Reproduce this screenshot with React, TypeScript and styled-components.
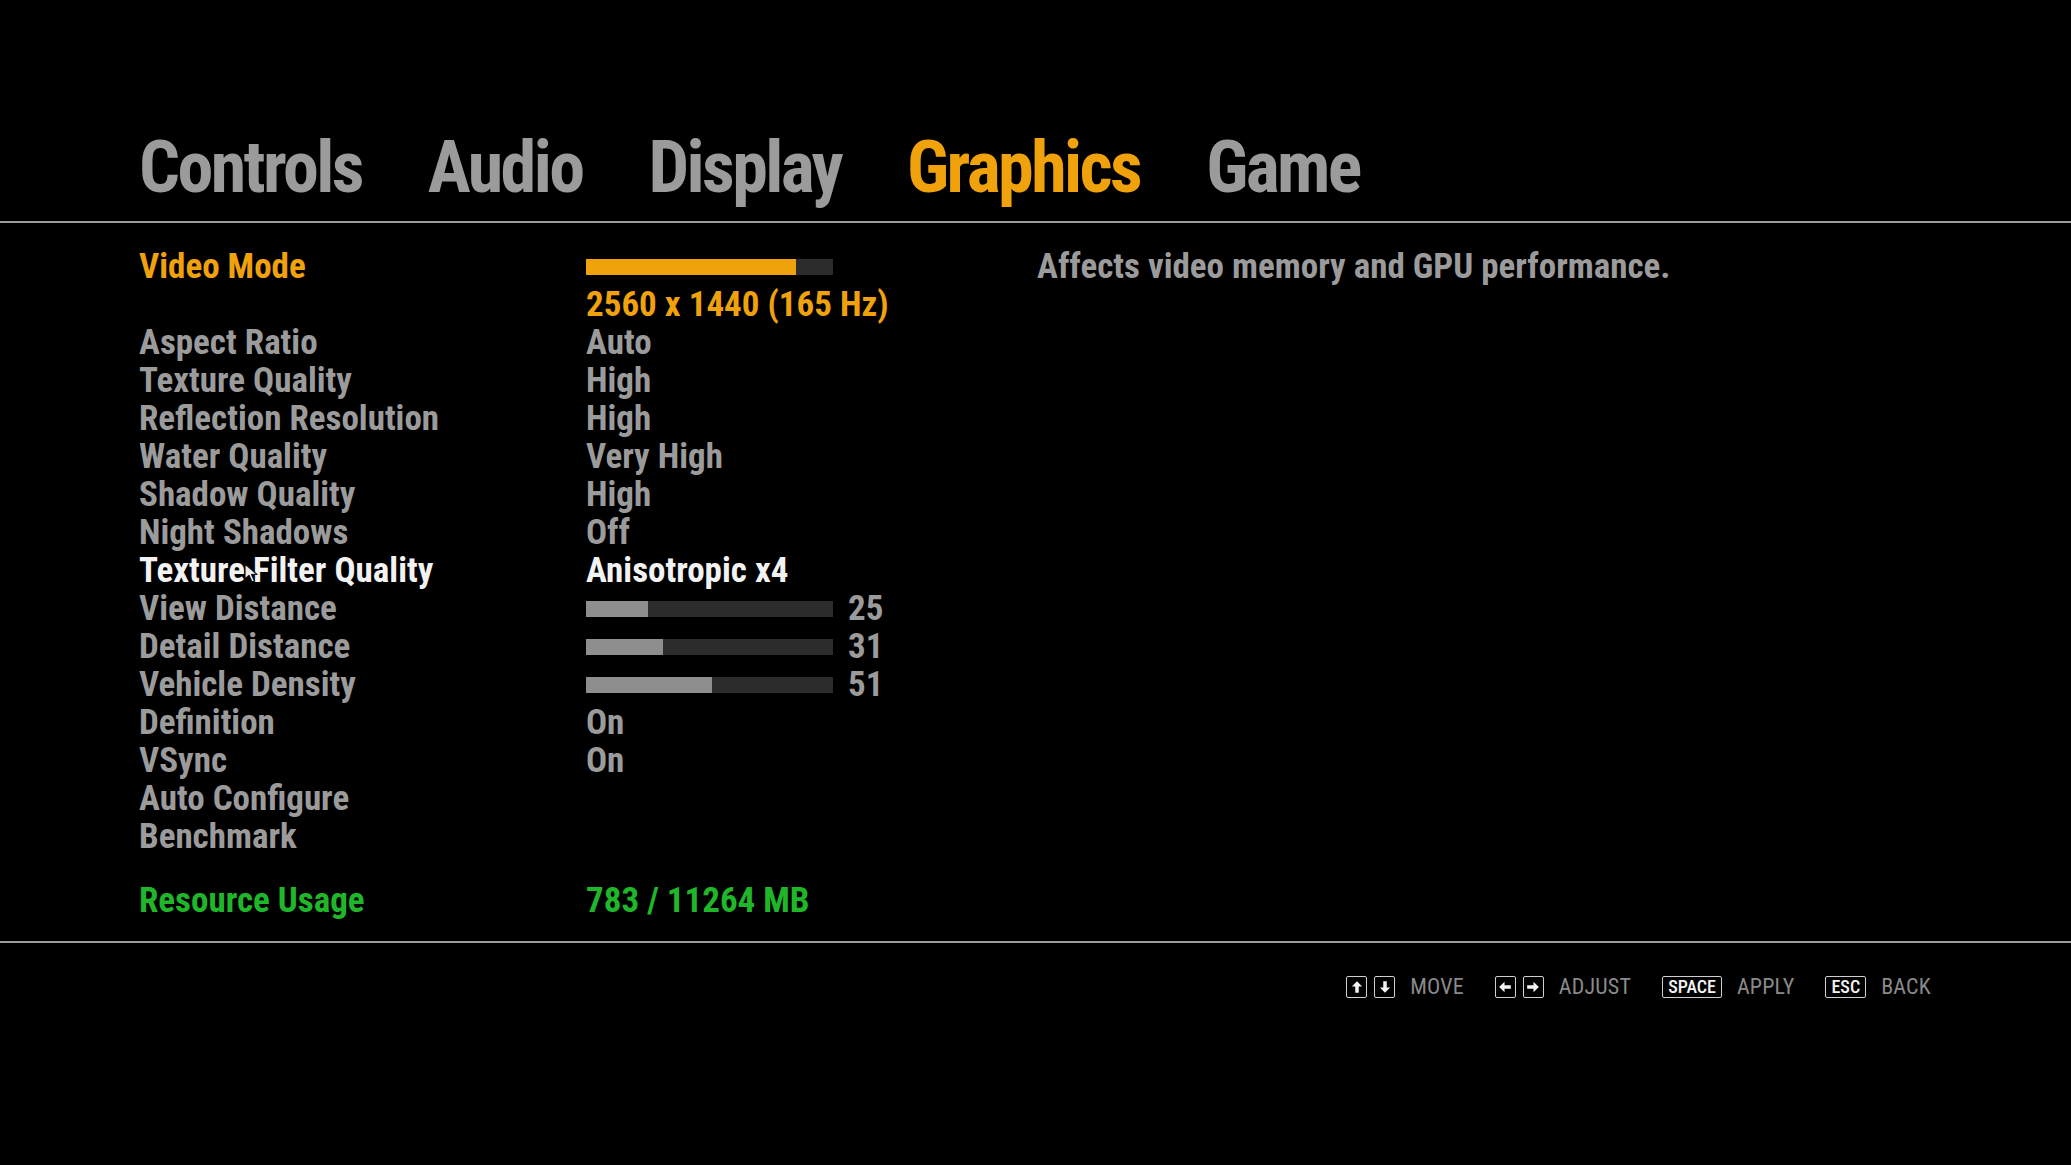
import React from "react";
import styled, { createGlobalStyle } from "styled-components";

const ORANGE = "#f0a20c";
const GREEN = "#1fb62a";
const GREY = "#9b9b9b";
const WHITE = "#f2f2f2";

const Global = createGlobalStyle`
  html, body { margin: 0; padding: 0; background: #000; }
  body {
    font-family: Roboto, "Liberation Sans", sans-serif;
    font-stretch: 75%;
    -webkit-font-smoothing: antialiased;
  }
`;

type Tone = "grey" | "orange" | "white" | "green";
const toneColor = (t: Tone = "grey") =>
	t === "orange" ? ORANGE : t === "white" ? WHITE : t === "green" ? GREEN : GREY;

type Row =
	| { kind: "text"; label?: string; value?: string; tone?: Tone; valueTone?: Tone }
	| { kind: "slider"; label: string; value: number; tone?: Tone; fill?: Tone; showNumber?: boolean };

const rows: Row[] = [
	{ kind: "slider", label: "Video Mode", value: 85, tone: "orange", fill: "orange", showNumber: false },
	{ kind: "text", value: "2560 x 1440 (165 Hz)", valueTone: "orange" },
	{ kind: "text", label: "Aspect Ratio", value: "Auto" },
	{ kind: "text", label: "Texture Quality", value: "High" },
	{ kind: "text", label: "Reflection Resolution", value: "High" },
	{ kind: "text", label: "Water Quality", value: "Very High" },
	{ kind: "text", label: "Shadow Quality", value: "High" },
	{ kind: "text", label: "Night Shadows", value: "Off" },
	{ kind: "text", label: "Texture Filter Quality", value: "Anisotropic x4", tone: "white", valueTone: "white" },
	{ kind: "slider", label: "View Distance", value: 25 },
	{ kind: "slider", label: "Detail Distance", value: 31 },
	{ kind: "slider", label: "Vehicle Density", value: 51 },
	{ kind: "text", label: "Definition", value: "On" },
	{ kind: "text", label: "VSync", value: "On" },
	{ kind: "text", label: "Auto Configure" },
	{ kind: "text", label: "Benchmark" },
];

const tabs = ["Controls", "Audio", "Display", "Graphics", "Game"];
const activeTab = "Graphics";

const Arrow: React.FC<{ dir: "up" | "down" | "left" | "right" }> = ({ dir }) => {
	const rot = { up: 0, right: 90, down: 180, left: 270 }[dir];
	return (
		<svg width="14" height="14" viewBox="0 0 12 12" style={{ transform: `rotate(${rot}deg)` }}>
			<path d="M6 1 L1.6 5.6 H4.5 V11 H7.5 V5.6 H10.4 Z" fill="#f4f4f4" />
		</svg>
	);
};

const Cursor = () => (
	<CursorWrap>
		<svg width="17" height="20" viewBox="0 0 17 20">
			<path d="M1 1 L1 16 L5 12.5 L8 19 L10.5 18 L7.6 11.6 L13 11.4 Z" fill="#e8e8e8" stroke="#111" strokeWidth="1.2" strokeLinejoin="round" />
		</svg>
	</CursorWrap>
);

export default function App() {
	return (
		<Page>
			<Global />
			<TabBar>
				{tabs.map((t) => (
					<Tab key={t} $active={t === activeTab}>
						{t}
					</Tab>
				))}
			</TabBar>

			<Body>
				<List>
					{rows.map((r, i) => (
						<SettingRow key={i}>
							<Label $tone={r.tone}>{r.label}</Label>
							{r.kind === "slider" ? (
								<ValueCell>
									<Track>
										<Fill $tone={r.fill || "grey"} style={{ width: `${r.value}%` }} />
									</Track>
									{r.showNumber !== false && <Number>{r.value}</Number>}
								</ValueCell>
							) : (
								<ValueCell>
									<Value $tone={r.valueTone}>{r.value}</Value>
								</ValueCell>
							)}
						</SettingRow>
					))}
					<UsageRow>
						<Label $tone="green">Resource Usage</Label>
						<ValueCell>
							<Value $tone="green">783 / 11264 MB</Value>
						</ValueCell>
					</UsageRow>
				</List>
				<Description>Affects video memory and GPU performance.</Description>
			</Body>

			<Footer>
				<Hint>
					<Keys>
						<Key><Arrow dir="up" /></Key>
						<Key><Arrow dir="down" /></Key>
					</Keys>
					<HintLabel>MOVE</HintLabel>
				</Hint>
				<Hint>
					<Keys>
						<Key><Arrow dir="left" /></Key>
						<Key><Arrow dir="right" /></Key>
					</Keys>
					<HintLabel>ADJUST</HintLabel>
				</Hint>
				<Hint>
					<Key $wide>SPACE</Key>
					<HintLabel>APPLY</HintLabel>
				</Hint>
				<Hint>
					<Key $wide>ESC</Key>
					<HintLabel>BACK</HintLabel>
				</Hint>
			</Footer>

			<Cursor />
		</Page>
	);
}

const Page = styled.div`
	position: relative;
	width: 100%;
	height: 1165px;
	overflow: hidden;
	background: #000;
`;

const TabBar = styled.div`
	display: flex;
	gap: 66px;
	padding: 132px 0 17px 139px;
	border-bottom: 2px solid #9a9a9a;
`;

const Tab = styled.div<{ $active?: boolean }>`
	font-size: 72px;
	line-height: 72px;
	font-weight: 700;
	letter-spacing: -2.6px;
	color: ${(p) => (p.$active ? ORANGE : GREY)};
`;

const Body = styled.div`
	display: flex;
	padding: 25px 0 21px 139px;
	border-bottom: 2px solid #9a9a9a;
`;

const List = styled.div`
	width: 898px;
	display: flex;
	flex-direction: column;
`;

const SettingRow = styled.div`
	display: grid;
	grid-template-columns: 447px 1fr;
	grid-template-rows: 38px;
	align-items: center;
	height: 38px;
`;

const UsageRow = styled(SettingRow)`
	margin-top: 26px;
`;

const textBase = `
	font-size: 35px;
	line-height: 38px;
	font-weight: 700;
	white-space: nowrap;
`;

const Label = styled.div<{ $tone?: Tone }>`
	${textBase}
	color: ${(p) => toneColor(p.$tone)};
`;

const ValueCell = styled.div`
	display: flex;
	align-items: center;
	height: 38px;
`;

const Value = styled.div<{ $tone?: Tone }>`
	${textBase}
	color: ${(p) => toneColor(p.$tone)};
`;

const Track = styled.div`
	width: 247px;
	height: 16px;
	background: #2c2c2c;
`;

const Fill = styled.div<{ $tone: Tone }>`
	height: 100%;
	background: ${(p) => (p.$tone === "orange" ? ORANGE : "#8e8e8e")};
`;

const Number = styled.div`
	${textBase}
	color: ${GREY};
	margin-left: 15px;
`;

const Description = styled.div`
	${textBase}
	color: ${GREY};
`;

const Footer = styled.div`
	display: flex;
	justify-content: flex-end;
	align-items: center;
	gap: 31px;
	padding: 33px 140px 0 0;
`;

const Hint = styled.div`
	display: flex;
	align-items: center;
	gap: 15px;
`;

const Keys = styled.div`
	display: flex;
	gap: 7px;
`;

const Key = styled.div<{ $wide?: boolean }>`
	display: flex;
	align-items: center;
	justify-content: center;
	box-sizing: border-box;
	height: 22px;
	min-width: 21px;
	padding: ${(p) => (p.$wide ? "0 5px" : "0")};
	border: 1px solid #cfcfcf;
	border-radius: 2px;
	font-size: 18px;
	font-weight: 500;
	color: #f4f4f4;
	line-height: 1;
`;

const HintLabel = styled.div`
	font-size: 22px;
	font-weight: 400;
	color: #8a8a8a;
	line-height: 22px;
	letter-spacing: 0.2px;
`;

const CursorWrap = styled.div`
	position: absolute;
	left: 244px;
	top: 563px;
	pointer-events: none;
`;
